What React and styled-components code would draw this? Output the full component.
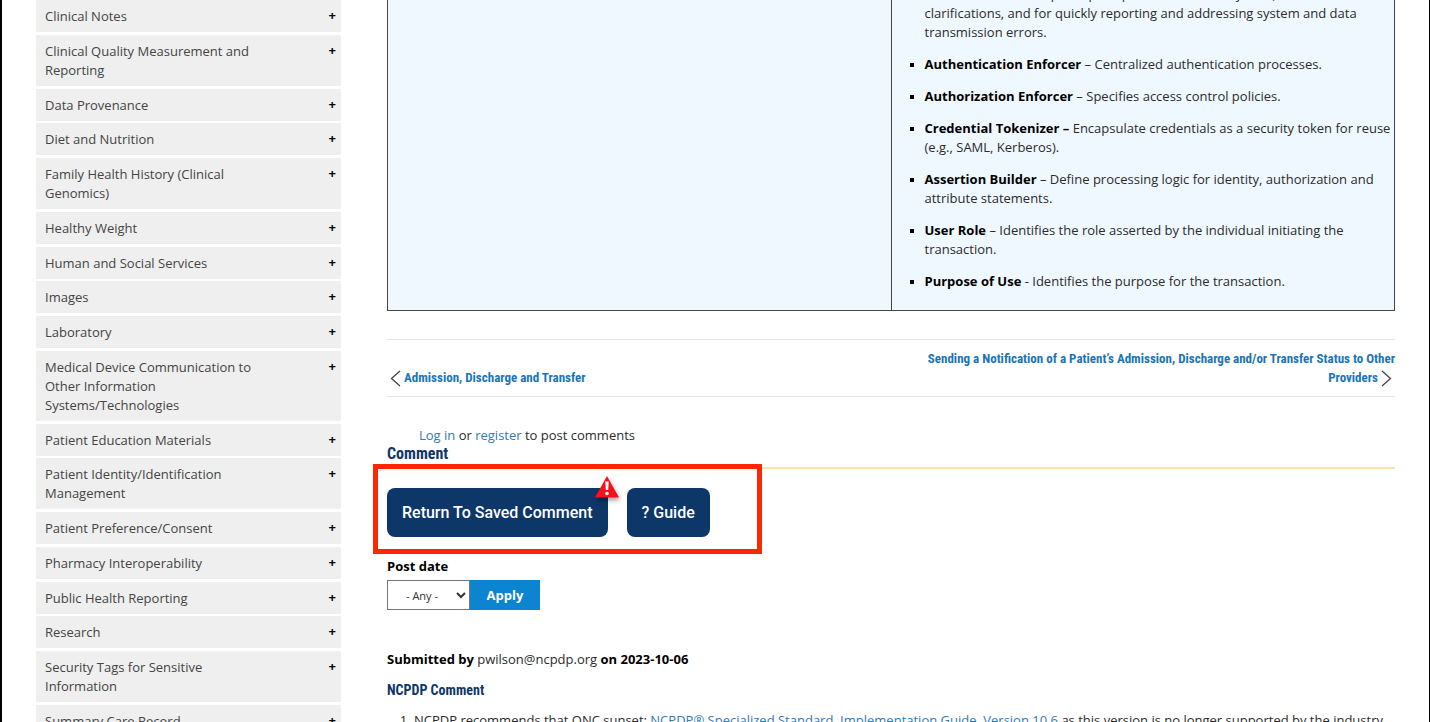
import React from 'react';
import styled, { createGlobalStyle } from 'styled-components';

const topics = [
    'Clinical Notes',
    'Clinical Quality Measurement and Reporting',
    'Data Provenance',
    'Diet and Nutrition',
    'Family Health History (Clinical Genomics)',
    'Healthy Weight',
    'Human and Social Services',
    'Images',
    'Laboratory',
    'Medical Device Communication to Other Information Systems/Technologies',
    'Patient Education Materials',
    'Patient Identity/Identification Management',
    'Patient Preference/Consent',
    'Pharmacy Interoperability',
    'Public Health Reporting',
    'Research',
    'Security Tags for Sensitive Information',
    'Summary Care Record'
];

const securityPatterns = [
    { name: 'Authentication Enforcer', dash: ' – ', text: 'Centralized authentication processes.' },
    { name: 'Authorization Enforcer', dash: ' – ', text: 'Specifies access control policies.' },
    { name: 'Credential Tokenizer –', dash: ' ', text: 'Encapsulate credentials as a security token for reuse (e.g., SAML, Kerberos).' },
    { name: 'Assertion Builder', dash: ' – ', text: 'Define processing logic for identity, authorization and attribute statements.' },
    { name: 'User Role', dash: ' – ', text: 'Identifies the role asserted by the individual initiating the transaction.' },
    { name: 'Purpose of Use', dash: ' - ', text: 'Identifies the purpose for the transaction.' }
];

const condensed = '"Roboto Condensed", "Liberation Sans Narrow", Roboto, sans-serif';

const GlobalStyle = createGlobalStyle`
    * {
        box-sizing: border-box;
    }

    body {
        margin: 0;
        background: #fff;
        color: #2b2b2b;
        font-family: "Open Sans", "Noto Sans", sans-serif;
        font-size: 13px;
        line-height: 19px;
    }

    b {
        color: #000;
    }
`;

const Page = styled.div`
    display: flex;
    align-items: flex-start;
    gap: 46px;
    height: 100vh;
    padding: 0 34px;
    overflow: hidden;
    border-left: 2px solid #000;
    border-right: 1px solid #000;
`;

const Sidebar = styled.nav`
    flex: 0 0 305px;
`;

const TopicList = styled.ul`
    display: flex;
    flex-direction: column;
    justify-content: space-between;
    min-height: calc(100vh + 15px);
    margin: 0;
    padding: 0;
    list-style: none;
`;

const TopicButton = styled.button`
    display: flex;
    justify-content: space-between;
    align-items: flex-start;
    width: 100%;
    padding: 7px 5px 6px 9px;
    border: 0;
    background: #efefef;
    color: #444;
    font: inherit;
    text-align: left;
    cursor: pointer;

    span {
        max-width: 215px;
    }

    b {
        line-height: 17px;
    }
`;

const Main = styled.main`
    flex: 1;
    min-width: 0;
    margin-top: -16px;
`;

const PatternTable = styled.table`
    width: 100%;
    table-layout: fixed;
    border-collapse: collapse;
    background: #f0f8ff;

    td {
        padding: 0 0 19px 8px;
        border: 1px solid #444;
        vertical-align: top;
    }
`;

const PatternList = styled.ul`
    display: flex;
    flex-direction: column;
    gap: 13px;
    margin: 0;
    padding-left: 25px;
    list-style: square;

    li::marker {
        color: #000;
        font-size: 11px;
    }
`;

const Pager = styled.nav`
    display: flex;
    justify-content: space-between;
    align-items: flex-end;
    margin-top: 28px;
    padding: 9px 0;
    border-top: 1px solid #e4e4e4;
    border-bottom: 1px solid #e4e4e4;
`;

const PagerLink = styled.a`
    max-width: 50%;
    color: #1a75b8;
    font-family: ${condensed};
    font-size: 13px;
    font-weight: 700;
    text-align: ${(props) => (props.$next ? 'right' : 'left')};
    text-decoration: none;

    svg {
        margin: 0 3px;
        vertical-align: middle;
    }
`;

const LoginLine = styled.p`
    margin: 29px 0 0;
    padding-left: 32px;
`;

const Link = styled.a`
    color: #337ab7;
    text-decoration: none;
`;

const SectionTitle = styled.h2`
    margin: 0;
    padding-bottom: 4px;
    border-bottom: 2px solid #ffe3a0;
    color: #0f3766;
    font-family: ${condensed};
    font-size: 16px;
    font-weight: 700;
    line-height: 18px;
`;

const Highlight = styled.div`
    display: flex;
    gap: 19px;
    width: fit-content;
    margin: -5px 0 0 -14px;
    padding: 19px 47px 12px 9px;
    border: 5px solid #ff2600;
    position: relative;
`;

const NavyButton = styled.button`
    position: relative;
    height: 49px;
    padding: 0 15px;
    border: 0;
    border-radius: 8px;
    background: #0d3768;
    color: #fff;
    font-family: Roboto, sans-serif;
    font-size: 16px;
    font-weight: 500;
    cursor: pointer;
`;

const WarningBadge = styled.svg`
    position: absolute;
    top: -13px;
    right: -12px;
    filter: drop-shadow(1px 3px 2px rgba(0, 0, 0, 0.35));
`;

const FilterForm = styled.form`
    margin-top: 3px;
`;

const FilterLabel = styled.label`
    display: block;
    margin-bottom: 4px;
    color: #000;
    font-weight: 700;
`;

const FilterRow = styled.div`
    display: flex;
    align-items: stretch;
    height: 30px;
`;

const DateSelect = styled.select`
    width: 83px;
    padding: 0 0 0 14px;
    border: 1px solid #767676;
    border-radius: 0;
    background: #fff;
    color: #333;
    font-family: "Open Sans", sans-serif;
    font-size: 11px;
`;

const ApplyButton = styled.button`
    width: 70px;
    border: 0;
    background: #0c84d0;
    color: #fff;
    font: inherit;
    font-weight: 700;
`;

const Submitted = styled.p`
    margin: 40px 0 0;
`;

const CommentTitle = styled.h3`
    margin: 12px 0 11px;
    color: #0f3766;
    font-family: ${condensed};
    font-size: 14px;
    font-weight: 700;
`;

const CommentList = styled.ol`
    margin: 0;
    padding-left: 27px;
`;

const Chevron = ({ next }) => (
    <svg width="11" height="17" viewBox="0 0 11 17" fill="none" stroke="#444" strokeWidth="1.3" aria-hidden="true">
        <path d={next ? 'M1 1 L9.5 8.5 L1 16' : 'M10 1 L1.5 8.5 L10 16'} />
    </svg>
);

class App extends React.Component {
    state = {
        postDate: 'any'
    }

    changePostDate = (event) => {
        this.setState({ postDate: event.target.value });
    }

    render() {
        return (
            <Page>
                <GlobalStyle />
                <Sidebar aria-label="Topics">
                    <TopicList>
                        {topics.map((topic) => (
                            <li key={topic}>
                                <TopicButton type="button">
                                    <span>{topic}</span>
                                    <b>+</b>
                                </TopicButton>
                            </li>
                        ))}
                    </TopicList>
                </Sidebar>
                <Main>
                    <PatternTable>
                        <tbody>
                            <tr>
                                <td />
                                <td>
                                    <PatternList>
                                        <li>
                                            This should allow help and prompt resolutions for system,
                                            <br />
                                            clarifications, and for quickly reporting and addressing system and data
                                            <br />
                                            transmission errors.
                                        </li>
                                        {securityPatterns.map((pattern) => (
                                            <li key={pattern.name}>
                                                <b>{pattern.name}</b>{pattern.dash}{pattern.text}
                                            </li>
                                        ))}
                                    </PatternList>
                                </td>
                            </tr>
                        </tbody>
                    </PatternTable>
                    <Pager aria-label="Pages">
                        <PagerLink href="#previous">
                            <Chevron />
                            Admission, Discharge and Transfer
                        </PagerLink>
                        <PagerLink href="#next" $next>
                            Sending a Notification of a Patient’s Admission, Discharge and/or Transfer Status to Other Providers
                            <Chevron next />
                        </PagerLink>
                    </Pager>
                    <LoginLine>
                        <Link href="#login">Log in</Link> or <Link href="#register">register</Link> to post comments
                    </LoginLine>
                    <SectionTitle>Comment</SectionTitle>
                    <Highlight>
                        <NavyButton type="button">
                            Return To Saved Comment
                            <WarningBadge width="26" height="24" viewBox="0 0 26 24" aria-hidden="true">
                                <path d="M13 1 L25 22.5 H1 Z" fill="#fb0f1c" />
                                <path d="M11.3 6.5 H14.7 L14.2 15 H11.8 Z" fill="#fff" />
                                <circle cx="13" cy="18.5" r="1.8" fill="#fff" />
                            </WarningBadge>
                        </NavyButton>
                        <NavyButton type="button">? Guide</NavyButton>
                    </Highlight>
                    <FilterForm onSubmit={(event) => event.preventDefault()}>
                        <FilterLabel htmlFor="post-date">Post date</FilterLabel>
                        <FilterRow>
                            <DateSelect id="post-date" value={this.state.postDate} onChange={this.changePostDate}>
                                <option value="any">- Any -</option>
                            </DateSelect>
                            <ApplyButton type="submit">Apply</ApplyButton>
                        </FilterRow>
                    </FilterForm>
                    <Submitted>
                        <b>Submitted by</b> pwilson@ncpdp.org <b>on 2023-10-06</b>
                    </Submitted>
                    <CommentTitle>NCPDP Comment</CommentTitle>
                    <CommentList>
                        <li>
                            NCPDP recommends that ONC sunset: <Link href="#guide">NCPDP® Specialized Standard, Implementation Guide, Version 10.6</Link> as this version is no longer supported by the industry.
                        </li>
                    </CommentList>
                </Main>
            </Page>
        );
    }
}

export default App;
